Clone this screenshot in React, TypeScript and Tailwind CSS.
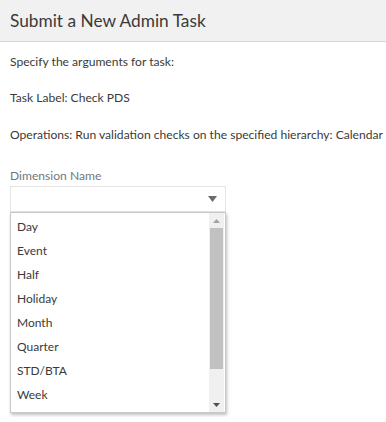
const items = ["Day", "Event", "Half", "Holiday", "Month", "Quarter", "STD/BTA", "Week"];

function ScrollArrow({ up }: { up?: boolean }) {
    return (
        <svg width="7" height="4" viewBox="0 0 7 4">
            <path d={up ? "M0 4 L3.5 0 L7 4 Z" : "M0 0 L7 0 L3.5 4 Z"} fill={up ? "#a3a3a3" : "#505050"} />
        </svg>
    );
}

export default function App() {
    return (
        <div className="w-[386px] h-[422px] bg-white text-[#3a3a3a] font-['Lato',sans-serif] overflow-hidden">
            <div className="h-[42px] bg-[#f1f1f1] border-b border-[#d6d6d6] flex items-center px-[10px]">
                <h1 className="text-[17.3px] text-[#3a3a3a]">Submit a New Admin Task</h1>
            </div>
            <div className="px-[10px] text-[12.1px] leading-[16px]">
                <p className="mt-[12px]">Specify the arguments for task:</p>
                <p className="mt-[20px]">Task Label: Check PDS</p>
                <p className="mt-[21px] whitespace-nowrap">Operations: Run validation checks on the specified hierarchy: Calendar</p>
                <label className="block mt-[25px] text-[#6f7880]">Dimension Name</label>
                <div className="relative w-[216px] mt-[2px]">
                    <div className="h-[26px] border border-[#e4e4e4] flex items-center justify-end pr-[8px]">
                        <svg width="9" height="6" viewBox="0 0 9 6">
                            <path d="M0 0 L9 0 L4.5 6 Z" fill="#6b6b6b" />
                        </svg>
                    </div>
                    <div className="absolute left-0 top-[26px] w-[216px] h-[201px] bg-white border border-[#c8c8c8] shadow-[1px_2px_3px_rgba(0,0,0,0.25)] flex">
                        <ul className="flex-1 pt-[2px]">
                            {items.map((item) => (
                                <li key={item} className="h-[24px] flex items-center pl-[6px] text-[12px] text-[#3a3a3a]">{item}</li>
                            ))}
                        </ul>
                        <div className="w-[15px] mr-[1px] bg-[#f0f0f0] flex flex-col">
                            <div className="h-[15px] flex items-center justify-center">
                                <ScrollArrow up />
                            </div>
                            <div className="mx-[1px] h-[141px] bg-[#c1c1c1]" />
                            <div className="flex-1" />
                            <div className="h-[15px] flex items-center justify-center">
                                <ScrollArrow />
                            </div>
                        </div>
                    </div>
                </div>
            </div>
        </div>
    );
}
